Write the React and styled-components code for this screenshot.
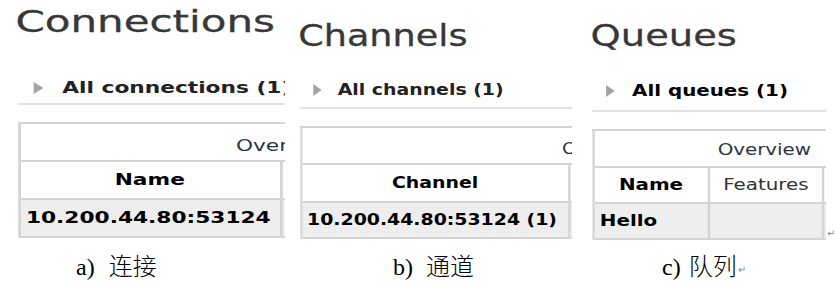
import styled, { createGlobalStyle } from 'styled-components'

const GlobalStyle = createGlobalStyle`
  html, body {
    margin: 0;
    padding: 0;
    background: #fff;
  }
  body {
    width: 835px;
    height: 287px;
    overflow: hidden;
    font-family: "DejaVu Sans", Verdana, sans-serif;
  }
`

const Page = styled.div`
  width: 835px;
  height: 287px;
  display: flex;
  flex-direction: column;
`

const Shots = styled.div`
  display: flex;
  height: 245px;
`

const Frame = styled.div`
  flex: none;
  width: ${(p) => p.width}px;
  margin-left: ${(p) => p.offset}px;
  height: 100%;
  overflow: hidden;
`

// the screenshots are stretched sideways, each by its own amount
const Panel = styled.div`
  width: ${(p) => p.width / p.sx + 30}px;
  padding-left: ${(p) => p.inset}px;
  box-sizing: border-box;
  transform: scaleX(${(p) => p.sx});
  transform-origin: left top;
  white-space: nowrap;
  font-size: ${(p) => p.body}px;
  line-height: 18px;
`

const Title = styled.h1`
  margin: ${(p) => p.top}px 0 0 -1.5px;
  font-size: ${(p) => p.size}px;
  font-weight: normal;
  line-height: 36px;
  color: #383838;
  -webkit-text-stroke: 0.3px #383838;
`

const Toggle = styled.div`
  display: flex;
  align-items: center;
  height: 18px;
  margin-top: ${(p) => p.gap}px;
  padding-left: 11px;
  font-weight: bold;
  color: ${(p) => p.tone};
`

const Arrow = styled.span`
  flex: none;
  width: 0;
  height: 0;
  margin-right: 14px;
  border-left: 7px solid #a3a3a3;
  border-top: 6px solid transparent;
  border-bottom: 6px solid transparent;
`

const Rule = styled.div`
  margin-top: ${(p) => p.gap}px;
  height: 2px;
  background: #e2e2e2;
`

const Grid = styled.div`
  margin-top: 17px;
  border-top: 2px solid #d4d4d4;
  border-left: 2px solid #d4d4d4;
`

const Row = styled.div`
  display: flex;
  height: ${(p) => p.h}px;
  background: ${(p) => (p.shade ? '#eeeeee' : '#ffffff')};
`

const GroupCell = styled.div`
  flex: none;
  width: 600px;
  box-sizing: border-box;
  padding: ${(p) => p.top}px 0 0 ${(p) => p.left}px;
  border-bottom: 2px solid #d4d4d4;
  color: #2e3440;
`

const Cell = styled.div`
  flex: none;
  width: ${(p) => p.w}px;
  box-sizing: border-box;
  display: flex;
  align-items: center;
  justify-content: ${(p) => (p.center ? 'center' : 'flex-start')};
  padding-left: ${(p) => (p.center ? 0 : 4)}px;
  border-right: 2px solid #d4d4d4;
  border-bottom: 2px solid #d4d4d4;
  font-weight: ${(p) => (p.bold ? 'bold' : 'normal')};
  color: ${(p) => (p.bold ? '#000' : '#333')};
`

const Mark = styled.span`
  flex: none;
  align-self: flex-start;
  margin: ${(p) => p.top}px 0 0 ${(p) => p.left}px;
  font-size: 10px;
  line-height: 10px;
  color: #8a8a8a;
`

const Captions = styled.div`
  display: flex;
  margin-top: 6px;
  padding-left: 76px;
  font-family: "Liberation Serif", "Noto Sans CJK SC", serif;
  font-size: 24px;
  line-height: 28px;
  color: #000;
`

const Caption = styled.div`
  flex: none;
  width: ${(p) => p.w}px;
  display: flex;
  align-items: baseline;
`

const Words = styled.span`
  margin-left: ${(p) => p.gap}px;
  font-family: "Noto Sans CJK SC", sans-serif;
  font-weight: 300;
`

const panels = [
  {
    key: 'a',
    width: 285,
    offset: 0,
    sx: 1.4,
    inset: 12.5,
    body: 15.5,
    titleSize: 30,
    titleTop: 3.5,
    toggleGap: 39.5,
    ruleGap: 6,
    tone: '#222',
    title: 'Connections',
    toggle: 'All connections (1)',
    rows: [38, 38, 38],
    group: { top: 13, left: 154 },
    cols: [
      { w: 187, head: 'Name', bold: true, value: '10.200.44.80:53124' },
      { w: 120, head: '', value: '' },
    ],
  },
  {
    key: 'b',
    width: 287,
    offset: 0,
    sx: 1.18,
    inset: 12.7,
    body: 16,
    titleSize: 31,
    titleTop: 17,
    toggleGap: 28,
    ruleGap: 8,
    tone: '#222',
    title: 'Channels',
    toggle: 'All channels (1)',
    rows: [37, 38, 36],
    group: { top: 12, left: 220 },
    cols: [
      { w: 227, head: 'Channel', bold: true, value: '10.200.44.80:53124 (1)' },
      { w: 120, head: '', value: '' },
    ],
  },
  {
    key: 'c',
    width: 246,
    offset: 8,
    sx: 1.24,
    inset: 10,
    body: 16,
    titleSize: 31,
    titleTop: 17,
    toggleGap: 29,
    ruleGap: 10,
    tone: '#000',
    title: 'Queues',
    toggle: 'All queues (1)',
    rows: [37, 36, 36],
    group: { top: 10, left: 99 },
    cols: [
      { w: 92.5, head: 'Name', bold: true, value: 'Hello' },
      { w: 92.8, head: 'Features', value: '' },
      { w: 60, head: '', value: '' },
    ],
  },
]

const Shot = ({ p }) => (
  <Frame width={p.width} offset={p.offset}>
    <Panel width={p.width} sx={p.sx} inset={p.inset} body={p.body}>
      <Title size={p.titleSize} top={p.titleTop}>{p.title}</Title>
      <Toggle gap={p.toggleGap} tone={p.tone}>
        <Arrow />
        {p.toggle}
      </Toggle>
      <Rule gap={p.ruleGap} />
      <Grid>
        <Row h={p.rows[0]}>
          <GroupCell top={p.group.top} left={p.group.left}>Overview</GroupCell>
        </Row>
        <Row h={p.rows[1]}>
          {p.cols.map((c, i) => (
            <Cell key={i} w={c.w} center bold={c.bold}>{c.head}</Cell>
          ))}
        </Row>
        <Row h={p.rows[2]} shade>
          {p.cols.map((c, i) => (
            <Cell key={i} w={c.w} bold>{c.value}</Cell>
          ))}
        </Row>
      </Grid>
    </Panel>
  </Frame>
)

export default function App() {
  return (
    <Page>
      <GlobalStyle />
      <Shots>
        {panels.map((p) => (
          <Shot key={p.key} p={p} />
        ))}
        <Mark top={229} left={1}>↵</Mark>
      </Shots>
      <Captions>
        <Caption w={317}>
          a)<Words gap={14}>连接</Words>
        </Caption>
        <Caption w={269}>
          b)<Words gap={13}>通道</Words>
        </Caption>
        <Caption w={120}>
          c)<Words gap={8}>队列</Words>
          <Mark top={14} left={1}>↵</Mark>
        </Caption>
      </Captions>
    </Page>
  )
}
